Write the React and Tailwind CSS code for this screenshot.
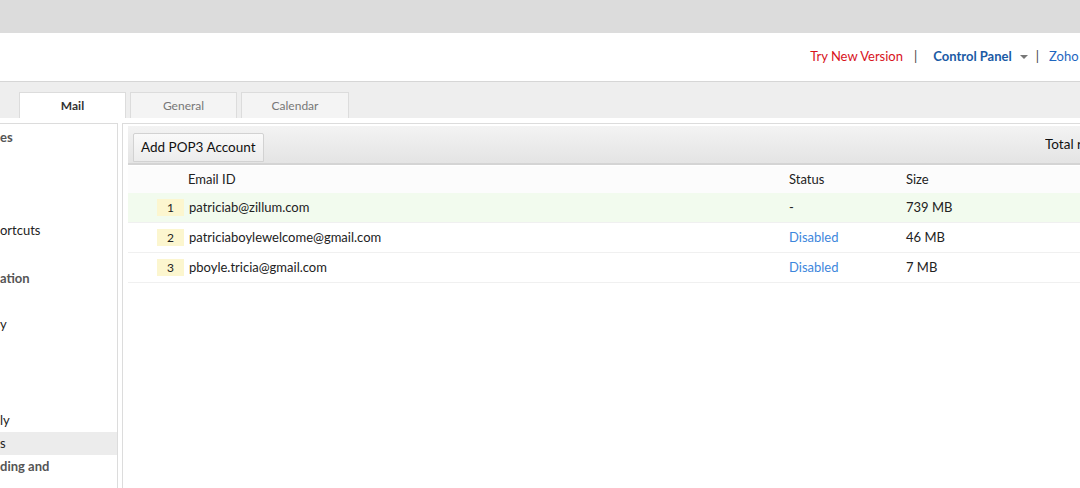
import React from 'react';

const rows = [
  { n: 1, email: 'patriciab@zillum.com', status: '-', size: '739 MB', active: true },
  { n: 2, email: 'patriciaboylewelcome@gmail.com', status: 'Disabled', size: '46 MB' },
  { n: 3, email: 'pboyle.tricia@gmail.com', status: 'Disabled', size: '7 MB' },
];

const sideItems = [
  { label: 'es', top: 'h-[28px]', cls: 'font-bold text-[#555]' },
  { label: '', top: 'h-[65px]' },
  { label: 'ortcuts', top: 'h-[28px]', cls: 'text-[#222]' },
  { label: '', top: 'h-[20px]' },
  { label: 'ation', top: 'h-[28px]', cls: 'font-bold text-[#555]' },
  { label: '', top: 'h-[18px]' },
  { label: 'y', top: 'h-[28px]', cls: 'text-[#222]' },
  { label: '', top: 'h-[70px]' },
  { label: 'ly', top: 'h-[23px]', cls: 'text-[#222]' },
  { label: 's', top: 'h-[23px]', cls: 'text-[#222] bg-[#ececec]' },
  { label: 'ding and', top: 'h-[24px]', cls: 'font-bold text-[#555]' },
];

export default function App() {
  return (
    <div className="w-[1080px] h-[488px] overflow-hidden bg-white text-[13px] text-[#222] font-['Lato',sans-serif]">
      <div className="h-[33px] bg-[#dcdcdc]" />

      <div className="h-[48px] flex items-center justify-end whitespace-nowrap">
        <span className="text-[#d8141c] mr-[11px]">Try New Version</span>
        <span className="text-[#444] mr-[16px]">|</span>
        <span className="text-[#1a5aa5] font-bold mr-[8px]">Control Panel</span>
        <span className="w-0 h-0 border-l-[4px] border-r-[4px] border-t-[4px] border-l-transparent border-r-transparent border-t-[#777] mr-[8px]" />
        <span className="text-[#444] mr-[10px]">|</span>
        <span className="text-[#1e66bf] w-[31px] overflow-hidden">Zoho Mail</span>
      </div>

      <div className="h-[37px] border-t border-[#d6d6d6] bg-[#eeeeee] flex items-end pl-[19px] gap-[4px]">
        <div className="w-[107px] h-[26px] bg-white border border-b-0 border-[#dcdcdc] flex items-center justify-center font-bold text-[12px] text-[#333]">Mail</div>
        <div className="w-[107px] h-[26px] bg-[#f4f4f4] border border-b-0 border-[#dcdcdc] flex items-center justify-center text-[12px] text-[#777]">General</div>
        <div className="w-[108px] h-[26px] bg-[#f4f4f4] border border-b-0 border-[#dcdcdc] flex items-center justify-center text-[12px] text-[#777]">Calendar</div>
      </div>

      <div className="flex h-[370px] pt-[5px]">
        <div className="w-[118px] shrink-0 border-r border-t border-[#dcdcdc]">
          {sideItems.map((it, i) => (
            <div key={i} className={`${it.top} flex items-center whitespace-nowrap ${it.cls || ''}`}>
              {it.label}
            </div>
          ))}
        </div>
        <div className="w-[4px] shrink-0" />
        <div className="flex-1 border-l border-t border-[#dcdcdc] pl-[5px] pt-[2px]">
          <div className="h-[39px] flex items-end justify-between bg-gradient-to-b from-[#f3f3f3] to-[#e4e4e4] border-b-2 border-[#d4d4d4] pl-[5px]">
            <div className="h-[29px] px-[7px] mb-[1px] flex items-center bg-gradient-to-b from-[#fafafa] to-[#ececec] border border-[#d2d2d2] rounded-t-[2px] text-[#111] text-[13.5px]">
              Add POP3 Account
            </div>
            <div className="self-center w-[35px] overflow-hidden whitespace-nowrap text-[#111] text-[13.5px]">Total records</div>
          </div>
          <div className="h-[27px] flex items-center bg-[#fcfcfc] mt-[1px]">
            <div className="w-[60px]" />
            <div className="w-[601px]">Email ID</div>
            <div className="w-[117px]">Status</div>
            <div>Size</div>
          </div>
          {rows.map((r) => (
            <div
              key={r.n}
              className={`h-[30px] flex items-center border-b border-[#f0f0f0] ${r.active ? 'bg-[#f2fbee]' : 'bg-white'}`}
            >
              <div className="w-[29px]" />
              <div className="w-[27px] h-[17px] bg-[#fcf6cf] flex items-center justify-center text-[12px]">{r.n}</div>
              <div className="w-[5px]" />
              <div className="w-[600px]">{r.email}</div>
              <div className={`w-[117px] ${r.status === 'Disabled' ? 'text-[#3d86dc]' : ''}`}>{r.status}</div>
              <div>{r.size}</div>
            </div>
          ))}
        </div>
      </div>
    </div>
  );
}
